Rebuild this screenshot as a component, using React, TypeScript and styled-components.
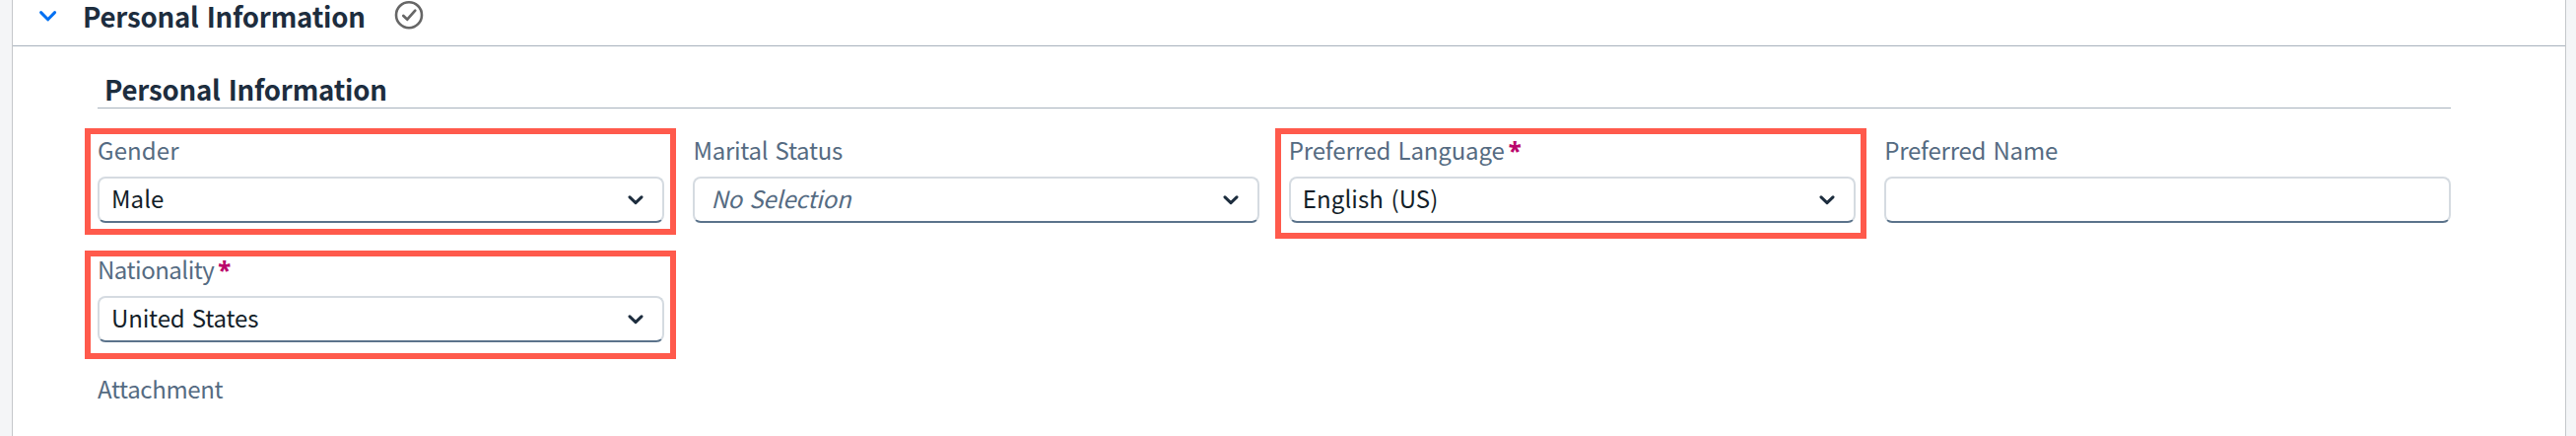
import React from 'react';
import styled, { createGlobalStyle, css } from 'styled-components';

const GlobalStyle = createGlobalStyle`
  *, *::before, *::after { box-sizing: border-box; }
  body {
    margin: 0;
    background: #f4f5f7;
    font-family: 'Noto Sans CJK SC', 'Noto Sans', sans-serif;
    overflow: hidden;
  }
`;

const Page = styled.main`
  height: 442px;
  padding: 0 10px 0 12px;
  overflow: hidden;
`;

const Panel = styled.section`
  height: 442px;
  background: #fff;
  border: solid #c5c8cb;
  border-width: 0 1px;
`;

const PanelHeader = styled.header`
  display: flex;
  align-items: flex-start;
  height: 47px;
  padding-left: 26px;
  border-bottom: 1px solid #a8b2bd;
`;

const ToggleIcon = styled.svg`
  flex: none;
  width: 20px;
  height: 16px;
  margin-top: 8px;
`;

const headingText = css`
  margin: 0;
  font-size: 27.6px;
  font-weight: 700;
  letter-spacing: -0.2px;
  word-spacing: 2px;
  color: #1d2d3e;
  white-space: nowrap;
`;

const PanelTitle = styled.h2`
  ${headingText}
  width: 314px;
  margin-left: 25px;
  line-height: 32px;
`;

const StatusIcon = styled.svg`
  flex: none;
  width: 30px;
  height: 30px;
  margin: 0 0 0 2px;
`;

const Content = styled.div`
  padding: 24px 116px 0 86px;
`;

const SectionTitle = styled.h3`
  ${headingText}
  height: 39px;
  padding-left: 7px;
  line-height: 39px;
  border-bottom: 1px solid #a8b2bd;
`;

const FieldGrid = styled.div`
  display: grid;
  grid-template-columns: repeat(4, 575px);
  column-gap: 29.4px;
  grid-auto-rows: 121px;
  padding-top: 27px;
`;

const Field = styled.div`
  position: relative;
  display: flex;
  flex-direction: column;
`;

const Label = styled.label<{ $spacing?: number }>`
  display: flex;
  align-items: baseline;
  height: 42px;
  font-size: 24px;
  line-height: 29px;
  letter-spacing: ${p => p.$spacing ?? 0}px;
  word-spacing: 2px;
  color: #556b82;
  white-space: pre;
`;

const Required = styled.span`
  margin-left: 4px;
  font-family: 'Noto Sans', sans-serif;
  font-size: 24px;
  font-weight: 800;
  color: #ba066c;
`;

const Control = styled.div<{ $placeholder?: boolean }>`
  display: flex;
  align-items: center;
  justify-content: space-between;
  height: 47px;
  padding: 0 19px 0 ${p => (p.$placeholder ? 16 : 12)}px;
  border: 2px solid #d5dbe1;
  border-bottom-color: #5b738b;
  border-radius: 8px;
  background: #fff;
  font-size: 24px;
  line-height: 36px;
  font-style: ${p => (p.$placeholder ? 'italic' : 'normal')};
  color: ${p => (p.$placeholder ? '#556b82' : '#131e29')};
`;

const Value = styled.span<{ $spacing?: number }>`
  padding-bottom: 4px;
  letter-spacing: ${p => p.$spacing ?? 0}px;
  word-spacing: 2px;
  white-space: nowrap;
`;

const Caret = styled.svg`
  flex: none;
  width: 16px;
  height: 12px;
`;

const Highlight = styled.div<{ $top: number; $height: number }>`
  position: absolute;
  left: -13.4px;
  top: ${p => p.$top}px;
  width: 600px;
  height: ${p => p.$height}px;
  border: 6px solid #ff5a4c;
  pointer-events: none;
`;

interface FieldData {
  label: string;
  labelSpacing?: number;
  value?: string;
  valueSpacing?: number;
  kind: 'select' | 'input' | 'none';
  placeholder?: boolean;
  required?: boolean;
  highlight?: [number, number];
}

const rows: FieldData[][] = [
  [
    { label: 'Gender', labelSpacing: 0.1, value: 'Male', valueSpacing: 0.1, kind: 'select', highlight: [-7, 108] },
    { label: 'Marital Status', labelSpacing: -0.25, value: 'No Selection', valueSpacing: -0.15, kind: 'select', placeholder: true },
    { label: 'Preferred Language', labelSpacing: -0.15, value: 'English (US)', valueSpacing: 0.1, kind: 'select', required: true, highlight: [-7, 112] },
    { label: 'Preferred Name', labelSpacing: -0.2, kind: 'input' },
  ],
  [{ label: 'Nationality', labelSpacing: -0.5, value: 'United States', valueSpacing: -0.15, kind: 'select', required: true, highlight: [-4, 110] }],
  [{ label: 'Attachment', labelSpacing: -0.35, kind: 'none' }],
];

const FormField = ({ field, first }: { field: FieldData; first: boolean }) => (
  <Field style={first ? { gridColumnStart: 1 } : undefined}>
    <Label $spacing={field.labelSpacing}>
      {field.label}
      {field.required && <Required>*</Required>}
    </Label>
    {field.kind !== 'none' && (
      <Control $placeholder={field.placeholder}>
        <Value $spacing={field.valueSpacing}>{field.value}</Value>
        {field.kind === 'select' && (
          <Caret viewBox="0 0 16 12" fill="none">
            <path d="M2 2.8 8 8.6l6-5.8" stroke="#1d2d3e" strokeWidth="3" strokeLinecap="round" strokeLinejoin="round" />
          </Caret>
        )}
      </Control>
    )}
    {field.highlight && <Highlight $top={field.highlight[0]} $height={field.highlight[1]} />}
  </Field>
);

export default function App() {
  return (
    <Page>
      <GlobalStyle />
      <Panel>
        <PanelHeader>
          <ToggleIcon viewBox="0 0 20 16" fill="none">
            <path d="m2.6 4.6 7 7.2 7-7.2" stroke="#0070f2" strokeWidth="3" strokeLinecap="round" strokeLinejoin="round" />
          </ToggleIcon>
          <PanelTitle>Personal Information</PanelTitle>
          <StatusIcon viewBox="0 0 30 30" fill="none" stroke="#666">
            <circle cx="15" cy="15.2" r="13" strokeWidth="2.6" />
            <path d="m9.3 15.9 4 3.8 8-9" strokeWidth="2.7" strokeLinecap="round" strokeLinejoin="round" />
          </StatusIcon>
        </PanelHeader>
        <Content>
          <SectionTitle>Personal Information</SectionTitle>
          <FieldGrid>
            {rows.map(row => row.map((field, i) => <FormField key={field.label} field={field} first={i === 0} />))}
          </FieldGrid>
        </Content>
      </Panel>
    </Page>
  );
}
